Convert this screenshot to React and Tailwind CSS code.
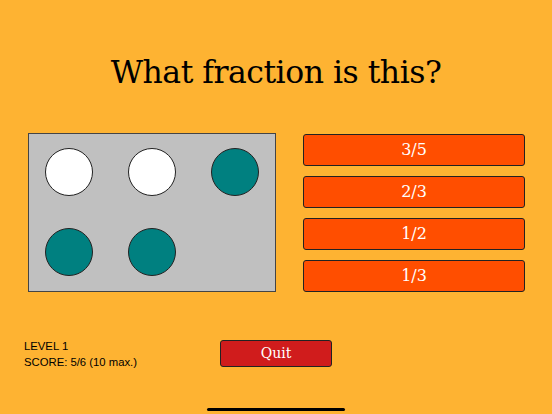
export default function App() {
  const rows = [[false, false, true], [true, true]]
  const answers = ["3/5", "2/3", "1/2", "1/3"]
  return (
    <div className="w-[552px] h-[414px] bg-[#feb332] relative overflow-hidden" style={{ fontFamily: '"DejaVu Serif", serif' }}>
      <h1 className="pt-[52px] h-[133px] text-center text-[31.5px] leading-[40px] text-black tracking-[-0.5px]">
        What fraction is this?
      </h1>
      <div className="flex pl-[28px] gap-[27px]">
        <div className="w-[248px] h-[159px] bg-[#c0c0c0] border border-[#444] flex flex-col gap-[32px] pl-[16px] pt-[14px]">
          {rows.map((row, r) => (
            <div key={r} className="flex gap-[35px]">
              {row.map((on, i) => (
                <div key={i} className={`w-[48px] h-[48px] rounded-full border border-[#222] ${on ? "bg-[#008080]" : "bg-white"}`} />
              ))}
            </div>
          ))}
        </div>
        <div className="flex flex-col gap-[10px] pt-[1px]">
          {answers.map((a) => (
            <button key={a} className="w-[222px] h-[32px] bg-[#ff4e00] border border-[#222] rounded-[3px] text-white text-[16px]">
              {a}
            </button>
          ))}
        </div>
      </div>
      <div className="flex items-start mt-[46px] pl-[24px]">
        <div className="w-[196px] text-[11.3px] leading-[16px] text-black" style={{ fontFamily: '"Liberation Sans", sans-serif' }}>
          <div>LEVEL 1</div>
          <div>SCORE: 5/6 (10 max.)</div>
        </div>
        <button className="mt-[2px] w-[112px] h-[27px] bg-[#d01c1c] border border-[#222] rounded-[3px] text-white text-[14px]">
          Quit
        </button>
      </div>
      <div className="absolute left-[207px] bottom-[3px] w-[138px] h-[3px] rounded-full bg-black" />
    </div>
  )
}
